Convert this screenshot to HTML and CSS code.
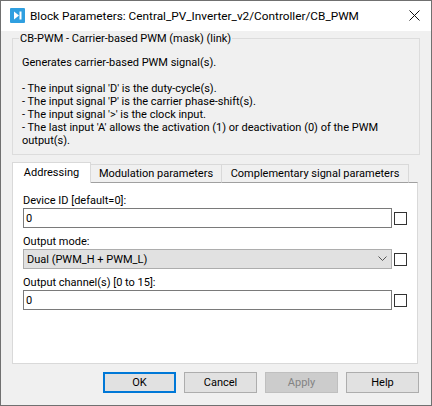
FILE: index.html
```html
<!DOCTYPE html>
<html lang="en">
<head>
    <meta charset="UTF-8">
    <title>Block Parameters</title>
    <link rel="stylesheet" href="styles.css">
</head>
<body>

<div class="window">
    <div class="titlebar">
        <svg class="app-icon" width="15" height="15" viewBox="0 0 15 15">
            <rect x="0" y="0" width="15" height="15" rx="1" fill="#2f9fe0"/>
            <path d="M4 3.5 L9 7.5 L4 11.5 Z" fill="#fff"/>
            <rect x="9.5" y="3.5" width="2" height="8" fill="#fff"/>
        </svg>
        <span class="title">Block Parameters: Central_PV_Inverter_v2/Controller/CB_PWM</span>
        <svg class="close" width="11" height="11" viewBox="0 0 11 11">
            <path d="M0.5 0.5 L10.5 10.5 M10.5 0.5 L0.5 10.5" stroke="#111" stroke-width="1" fill="none"/>
        </svg>
    </div>

    <div class="content">
        <!-- Description of the mask -->
        <fieldset class="group">
            <legend>CB-PWM - Carrier-based PWM (mask) (link)</legend>
            <p>Generates carrier-based PWM signal(s).</p>
            <p>- The input signal 'D' is the duty-cycle(s).<br>
            - The input signal 'P' is the carrier phase-shift(s).<br>
            - The input signal '&gt;' is the clock input.<br>
            - The last input 'A' allows the activation (1) or deactivation (0) of the PWM<br>
            output(s).</p>
        </fieldset>

        <div class="tabs">
            <div class="tab active">Addressing</div>
            <div class="tab tab-mod">Modulation parameters</div>
            <div class="tab tab-comp">Complementary signal parameters</div>
        </div>

        <div class="panel">
            <label class="field-label">Device ID [default=0]:</label>
            <div class="field-row">
                <div class="input">0</div>
                <span class="checkbox"></span>
            </div>
            <label class="field-label">Output mode:</label>
            <div class="field-row">
                <div class="select">
                    <span>Dual (PWM_H + PWM_L)</span>
                    <svg width="9" height="6" viewBox="0 0 9 6">
                        <path d="M0.5 0.5 L4.5 4.5 L8.5 0.5" stroke="#555" fill="none"/>
                    </svg>
                </div>
                <span class="checkbox"></span>
            </div>
            <label class="field-label">Output channel(s) [0 to 15]:</label>
            <div class="field-row">
                <div class="input">0</div>
                <span class="checkbox"></span>
            </div>
        </div>

        <div class="buttons">
            <div class="btn default">OK</div>
            <div class="btn">Cancel</div>
            <div class="btn disabled">Apply</div>
            <div class="btn">Help</div>
        </div>
    </div>
</div>

</body>
</html>
```

FILE: styles.css
```css
html, body {
    margin: 0;
    padding: 0;
}

body {
    font-family: Roboto, "Open Sans", sans-serif;
    font-size: 11px;
    color: #000;
}

.window {
    width: 432px;
    height: 406px;
    box-sizing: border-box;
    border: 1px solid #707070;
    background-color: #f0f0f0;
    display: flex;
    flex-direction: column;
}

.titlebar {
    height: 30px;
    background-color: #fff;
    display: flex;
    align-items: center;
    padding: 0 10px 0 9px;
    flex-shrink: 0;
}

.app-icon {
    margin-right: 5px;
    margin-top: -1px;
}

.title {
    flex: 1;
    font-size: 11.8px;
    white-space: nowrap;
    margin-top: -1px;
}

.close {
    margin-top: -1px;
    margin-right: 1px;
}

.content {
    flex: 1;
    padding: 0 11px;
}

.group {
    margin: 0;
    padding: 10px 9px 0 9px;
    height: 124px;
    box-sizing: border-box;
    border: 1px solid #dcdcdc;
}

.group legend {
    padding: 0 1px;
    margin-left: -3px;
    line-height: 15px;
}

.group p {
    margin: 0 0 13px 0;
    line-height: 13px;
}

.tabs {
    display: flex;
    align-items: flex-end;
    height: 21px;
    margin-top: 7px;
    position: relative;
    z-index: 1;
}

.tab {
    box-sizing: border-box;
    height: 19px;
    line-height: 17px;
    text-align: center;
    background-color: #f0f0f0;
    border: 1px solid #d9d9d9;
    border-left: 0;
    border-bottom: 1px solid #a0a0a0;
}

.tab.active {
    width: 79px;
    height: 21px;
    line-height: 19px;
    background-color: #fff;
    border-left: 1px solid #d9d9d9;
    border-bottom: 0;
}

.tab-mod {
    width: 131px;
}

.tab-comp {
    width: 187px;
}

.panel {
    box-sizing: border-box;
    width: 406px;
    height: 182px;
    background-color: #fff;
    border: 1px solid #d9d9d9;
    border-top: 1px solid #a0a0a0;
    margin-top: -1px;
    padding: 10px 9px 0 10px;
}

.field-label {
    display: block;
    line-height: 15px;
}

.field-row {
    display: flex;
    align-items: center;
    gap: 2px;
    margin-bottom: 6px;
}

.input {
    box-sizing: border-box;
    width: 369px;
    height: 20px;
    border: 1px solid #7a7a7a;
    background-color: #fff;
    line-height: 19px;
    padding-left: 2px;
}

.select {
    box-sizing: border-box;
    width: 369px;
    height: 20px;
    border: 1px solid #adadad;
    background-color: #e1e1e1;
    padding: 0 4px 0 3px;
    display: flex;
    align-items: center;
    justify-content: space-between;
}

.checkbox {
    box-sizing: border-box;
    width: 13px;
    height: 13px;
    border: 1px solid #333;
    background-color: #fff;
}

.buttons {
    display: flex;
    justify-content: flex-end;
    gap: 8px;
    margin-top: 8px;
    margin-right: 1px;
}

.btn {
    box-sizing: border-box;
    width: 73px;
    height: 21px;
    line-height: 19px;
    text-align: center;
    background-color: #e1e1e1;
    border: 1px solid #adadad;
}

.btn.default {
    border: 2px solid #0078d7;
    line-height: 17px;
}

.btn.disabled {
    background-color: #cccccc;
    border-color: #bfbfbf;
    color: #838383;
}
```
